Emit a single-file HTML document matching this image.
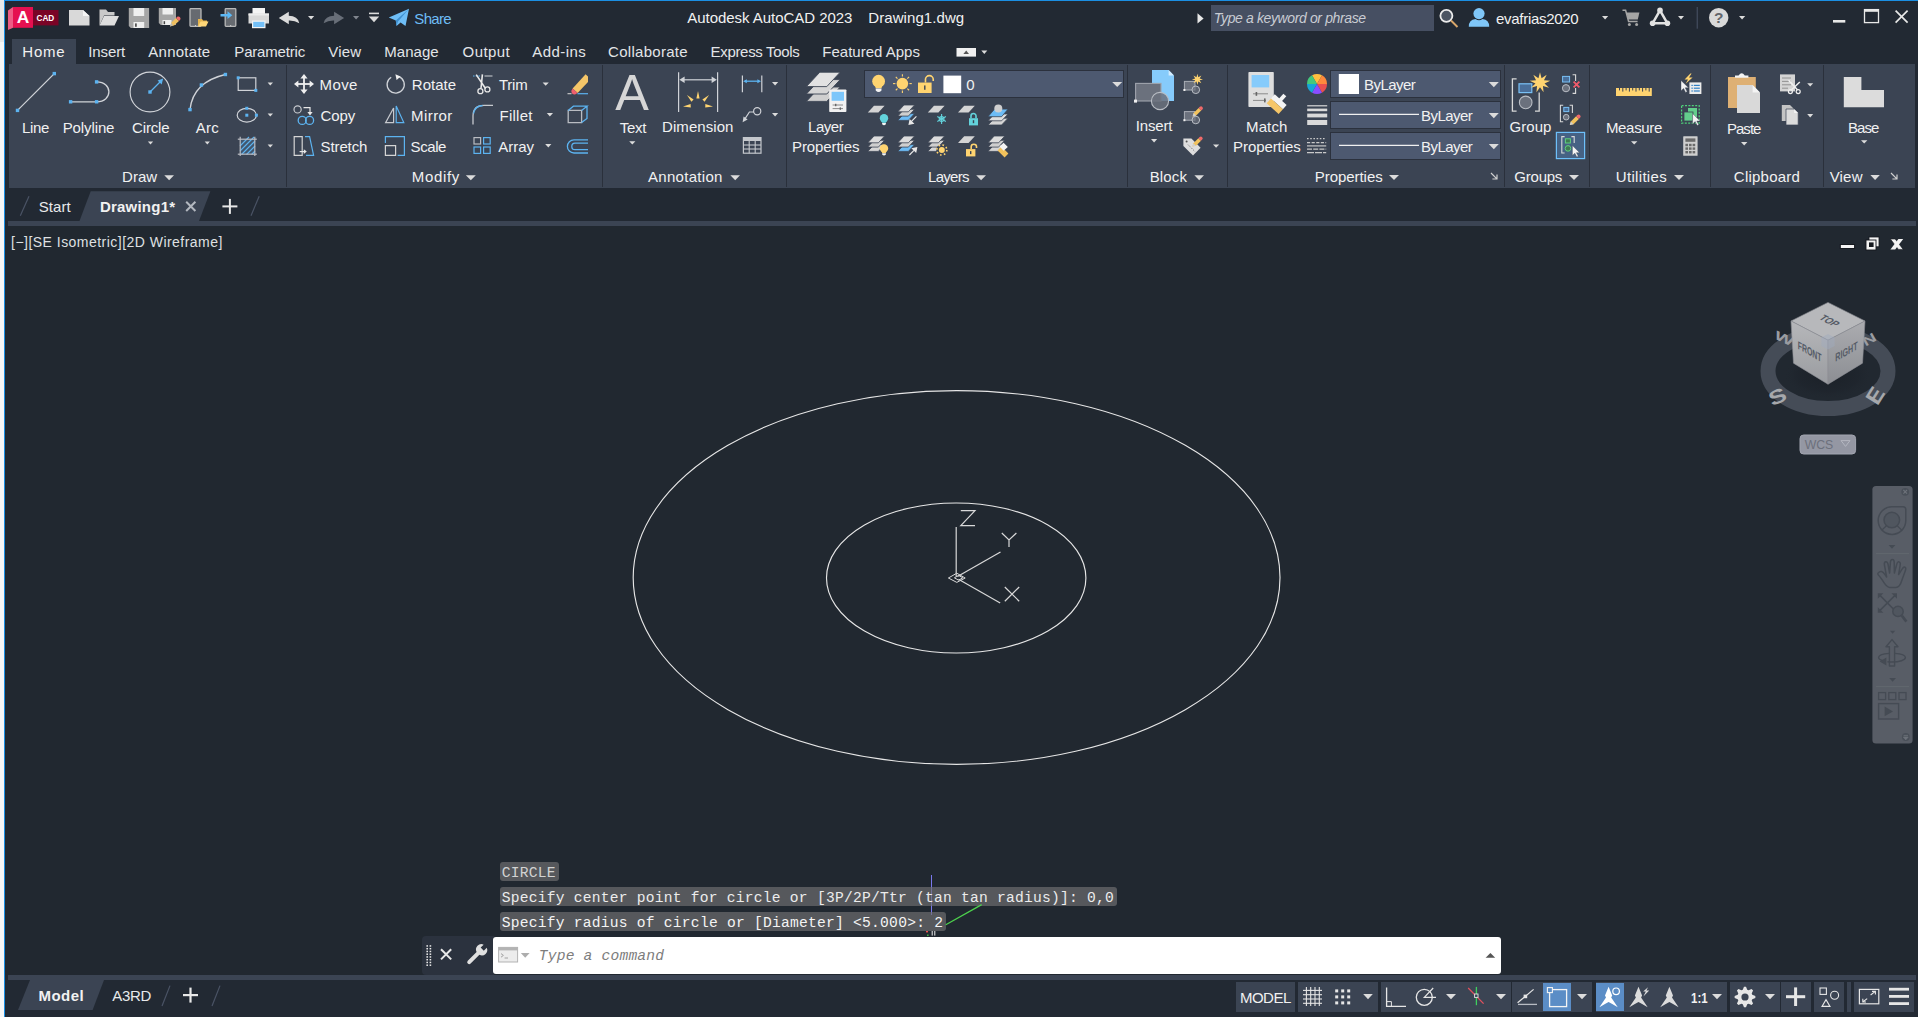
<!DOCTYPE html>
<html lang="en"><head><meta charset="utf-8"><title>Autodesk AutoCAD 2023 - Drawing1.dwg</title>
<style>
html,body{margin:0;padding:0;}
body{width:1918px;height:1017px;overflow:hidden;position:relative;background:#222933;font-family:"Liberation Sans",sans-serif;}
#bx div{position:absolute;}
.t{position:absolute;white-space:pre;}
.m{font-family:"Liberation Mono",monospace;}
#ic{position:absolute;left:0;top:0;}
</style></head><body>
<div id="bx">
<div style="left:0px;top:0px;width:4px;height:42px;background:#e9e9e9;"></div>
<div style="left:0px;top:42px;width:4px;height:975px;background:#f7f7f7;"></div>
<div style="left:4px;top:0px;width:1px;height:1017px;background:#1b8fe3;"></div>
<div style="left:4px;top:0px;width:1914px;height:1px;background:#1b8fe3;"></div>
<div style="left:12px;top:39px;width:64px;height:26px;background:#3b4453;"></div>
<div style="left:9px;top:64px;width:1906px;height:124px;background:#3b4453;"></div>
<div style="left:8px;top:221px;width:1908px;height:5px;background:#3b4453;"></div>
<div style="left:5px;top:226px;width:1913px;height:749px;background:#212830;"></div>
<div style="left:8px;top:975px;width:1908px;height:5px;background:#3b4453;"></div>
<div style="left:286px;top:65px;width:1px;height:122px;background:#2a303b;"></div>
<div style="left:602px;top:65px;width:1px;height:122px;background:#2a303b;"></div>
<div style="left:786px;top:65px;width:1px;height:122px;background:#2a303b;"></div>
<div style="left:1127px;top:65px;width:1px;height:122px;background:#2a303b;"></div>
<div style="left:1227px;top:65px;width:1px;height:122px;background:#2a303b;"></div>
<div style="left:1504px;top:65px;width:1px;height:122px;background:#2a303b;"></div>
<div style="left:1589px;top:65px;width:1px;height:122px;background:#2a303b;"></div>
<div style="left:1710px;top:65px;width:1px;height:122px;background:#2a303b;"></div>
<div style="left:1823px;top:65px;width:1px;height:122px;background:#2a303b;"></div>
<div style="left:1211px;top:5px;width:223px;height:26px;background:#464f62;"></div>
<div style="left:864px;top:70px;width:260px;height:28px;background:#4d5970;box-sizing:border-box;border:1px solid #2b313d;"></div>
<div style="left:1330px;top:70px;width:171px;height:28px;background:#4d5970;box-sizing:border-box;border:1px solid #2b313d;"></div>
<div style="left:1330px;top:101px;width:171px;height:28px;background:#4d5970;box-sizing:border-box;border:1px solid #2b313d;"></div>
<div style="left:1330px;top:132px;width:171px;height:28px;background:#4d5970;box-sizing:border-box;border:1px solid #2b313d;"></div>
<div style="left:1236px;top:982px;width:59px;height:29.5px;background:#3b4453;"></div>
<div style="left:1298px;top:982px;width:80px;height:29.5px;background:#3b4453;"></div>
<div style="left:1381px;top:982px;width:130px;height:29.5px;background:#3b4453;"></div>
<div style="left:1512px;top:982px;width:80px;height:29.5px;background:#3b4453;"></div>
<div style="left:1595.5px;top:982px;width:131.5px;height:29.5px;background:#3b4453;"></div>
<div style="left:1730px;top:982px;width:50px;height:29.5px;background:#3b4453;"></div>
<div style="left:1781px;top:982px;width:30px;height:29.5px;background:#3b4453;"></div>
<div style="left:1814px;top:982px;width:30px;height:29.5px;background:#3b4453;"></div>
<div style="left:1847px;top:982px;width:4px;height:29.5px;background:#3b4453;"></div>
<div style="left:1854px;top:982px;width:60px;height:29.5px;background:#3b4453;"></div>
<div style="left:1543px;top:982.5px;width:28px;height:28.5px;background:#5b8dc6;"></div>
<div style="left:1595.5px;top:982.5px;width:28.7px;height:28.5px;background:#5b8dc6;"></div>
<div style="left:931px;top:875px;width:1.2px;height:39.5px;background:#7a78ee;"></div>
<div style="left:500px;top:862px;width:59.3px;height:19px;background:rgba(112,112,114,0.68);border-radius:3px;"></div>
<div style="left:500px;top:887.3px;width:616.6px;height:18.8px;background:rgba(112,112,114,0.68);border-radius:3px;"></div>
<div style="left:500px;top:912.2px;width:445.8px;height:18.8px;background:rgba(112,112,114,0.68);border-radius:3px;"></div>
<div style="left:421.5px;top:936px;width:72px;height:38.5px;background:#2b323e;border-radius:4px 0 0 4px;"></div>
<div style="left:493px;top:937px;width:1008px;height:37px;background:#ffffff;border-radius:3px;"></div>
</div>
<svg id="ic" width="1918" height="1017" viewBox="0 0 1918 1017">
<path d="M8 10.5 L13 7 V27.8 L8 30 Z" fill="#ee5c86" />
<rect x="13" y="7" width="20" height="20.8" fill="#e51050" rx="0" />
<rect x="33" y="10" width="25.5" height="15.4" fill="#7a0426" rx="0" />
<text x="23" y="23.4" font-family="Liberation Sans, sans-serif" font-weight="700" font-size="17.4" fill="#fff" text-anchor="middle">A</text>
<text x="45.4" y="21" font-family="Liberation Sans, sans-serif" font-weight="700" font-size="9.4" fill="#fff" text-anchor="middle" textLength="17.8" lengthAdjust="spacingAndGlyphs">CAD</text>
<path d="M69 10 H83 L89.5 16 V25.5 H69 Z" fill="#d9d9d9" />
<path d="M83 10 L89.5 16 H83 Z" fill="#f4f4f4" />
<path d="M99.5 25.5 V9.5 H106 L108 12 H114.5 V15.5 H104 Z" fill="#c9c9c9" />
<path d="M99.5 25.5 L104 16 H119 L114.5 25.5 Z" fill="#dedede" />
<path d="M128.8 8 H149.1 V28 H130.8 L128.8 26 Z" fill="#a6a6a6" />
<rect x="133.5" y="8" width="10.7" height="8" fill="#efefef" rx="0" />
<rect x="133.5" y="22" width="10.7" height="6" fill="#efefef" rx="0" />
<rect x="135.1" y="23.4" width="1.6" height="3.4" fill="#444" rx="0" />
<path d="M158.8 8 H176 V25 H160.8 L158.8 23 Z" fill="#a6a6a6" />
<rect x="162.5" y="8" width="10.5" height="6.5" fill="#efefef" rx="0" />
<rect x="162.5" y="20" width="9" height="5" fill="#efefef" rx="0" />
<rect x="163.6" y="21.2" width="1.5" height="3" fill="#444" rx="0" />
<path d="M170 26.5 L171.2 22.8 L176 18 L179 21 L174 25.6 Z" fill="#f0c060" />
<path d="M176 18 L177.6 16.6 Q179 16 180 17.3 Q181 18.6 180.2 19.7 L179 21 Z" fill="#f06a6a" />
<path d="M170 26.5 L171.2 22.8 L173 25.2 Z" fill="#b9b9b9" />
<rect x="190" y="8.7" width="11" height="17.6" fill="#666a70" stroke="#b9b9b9" stroke-width="1.3" rx="0.8" />
<circle cx="195.5" cy="25.5" r="0.6" fill="#ddd" />
<path d="M198 26.5 V19 H202 L203.2 20.5 H207 V22 H201.5 Z" fill="#e6b54e" />
<path d="M198 26.5 L200.6 21.5 H208.5 L206 26.5 Z" fill="#ffd778" />
<rect x="225.2" y="8.7" width="10.6" height="17.6" fill="#666a70" stroke="#b9b9b9" stroke-width="1.3" rx="0.8" />
<circle cx="230.7" cy="25.5" r="0.6" fill="#ddd" />
<path d="M220.5 14 H227.5 V11.3 L232.3 15.2 L227.5 19 V16.4 H220.5 Z" fill="#5cb8f5" />
<rect x="252.5" y="8" width="12.5" height="6" fill="#f4f4f4" rx="0" />
<path d="M248.5 13.5 H269 V23.5 H248.5 Z" fill="#d9d9d9" />
<rect x="248.5" y="13.5" width="20.5" height="2" fill="#ececec" rx="0" />
<rect x="252" y="20.5" width="13.5" height="7.7" fill="#f4f4f4" rx="0" />
<rect x="253.2" y="21.8" width="11.2" height="5.2" fill="#74c0f7" rx="0" />
<path d="M0 6.2 L10 0 V4 Q19 4 20.5 11.5 Q16 8.5 10 8.7 V12.4 Z" fill="#dcdcdc" transform="translate(278.8 11.8)"/>
<path d="M308 16 H314.2 L311.1 19.6 Z" fill="#dcdcdc"/>
<path d="M0 6.2 L10 0 V4 Q19 4 20.5 11.5 Q16 8.5 10 8.7 V12.4 Z" fill="#686e78" transform="translate(344.1 11.8) scale(-1 1)"/>
<path d="M353 16 H359.2 L356.1 19.6 Z" fill="#80858e"/>
<rect x="369" y="12.6" width="10" height="1.6" fill="#dcdcdc" rx="0" />
<path d="M368.8 16.6 H379.2 L374 22.2 Z" fill="#dcdcdc"/>
<path d="M388.8 17.6 L409 8.8 L405.5 26 L400.6 22.6 L396.5 26 L395.8 20.6 Z" fill="#6ebdf6" />
<path d="M395.8 20.6 L409 8.8 L398 21.6 L396.5 26 Z" fill="#3f8fcf" />
<path d="M1197.5 13.3 L1203.6 18.4 L1197.5 23.5 Z" fill="#e8e8e8" />
<circle cx="1446.4" cy="15.8" r="6" fill="#4c5563" stroke="#ececec" stroke-width="1.8" />
<line x1="1451" y1="20.5" x2="1457.5" y2="27" stroke="#d8a66a" stroke-width="2" />
<circle cx="1479" cy="13.6" r="5.6" fill="#7fc6f8" />
<path d="M1468.8 26.7 Q1468.8 19.6 1475.5 19 Q1479 21.6 1482.5 19 Q1489.2 19.6 1489.2 26.7 Z" fill="#7fc6f8" />
<path d="M1602 16 H1608.2 L1605.1 19.6 Z" fill="#dcdcdc"/>
<path d="M1622.5 10.3 H1625.6 L1628.6 21.4 H1637.6" fill="none" stroke="#a5a5a5" stroke-width="1.5" />
<path d="M1626.4 12.6 H1639.4 L1637.8 19.6 H1628.2 Z" fill="#a5a5a5" />
<circle cx="1629.4" cy="24.6" r="1.5" fill="#a5a5a5" />
<circle cx="1636.6" cy="24.6" r="1.5" fill="#a5a5a5" />
<path d="M1660 10.4 L1652.6 23.3 H1667.4 Z" fill="none" stroke="#e2e2e2" stroke-width="2.5" stroke-linejoin="round"/>
<circle cx="1660" cy="10.4" r="2.8" fill="#e2e2e2" />
<circle cx="1652.6" cy="23.3" r="2.8" fill="#e2e2e2" />
<circle cx="1667.4" cy="23.3" r="2.8" fill="#e2e2e2" />
<path d="M1678 16 H1684 L1681 19.6 Z" fill="#dcdcdc"/>
<rect x="1696.7" y="7" width="1" height="21.7" fill="#4a5468" rx="0" />
<circle cx="1718.7" cy="17.7" r="9.7" fill="#d9d9d9" />
<text x="1718.7" y="23.4" font-family="Liberation Sans, sans-serif" font-weight="700" font-size="15.5" fill="#62656b" text-anchor="middle">?</text>
<path d="M1739 16 H1745.2 L1742.1 19.6 Z" fill="#dcdcdc"/>
<rect x="1833" y="20" width="12.3" height="2.6" fill="#e8e8e8" rx="0" />
<rect x="1864.5" y="9.6" width="14" height="13" fill="none" stroke="#e8e8e8" stroke-width="1.3" rx="0" />
<rect x="1864" y="9" width="15" height="2.8" fill="#e8e8e8" rx="0" />
<line x1="1895.6" y1="10.6" x2="1907.6" y2="22.6" stroke="#e8e8e8" stroke-width="1.7" />
<line x1="1907.6" y1="10.6" x2="1895.6" y2="22.6" stroke="#e8e8e8" stroke-width="1.7" />
<rect x="956.5" y="48" width="19.5" height="8.6" fill="#f0f0f0" rx="0" />
<path d="M963.4 54 L966.2 50.4 L969 54 Z" fill="#555" />
<path d="M981.3 50.6 H987.3 L984.3 54 Z" fill="#dcdcdc"/>
<line x1="17.5" y1="110.4" x2="54.3" y2="73.6" stroke="#d0d3d8" stroke-width="1.3" />
<rect x="15.8" y="108.7" width="3.4" height="3.4" fill="#5cb3f0" rx="0" />
<rect x="52.6" y="71.9" width="3.4" height="3.4" fill="#5cb3f0" rx="0" />
<path d="M70.6 101.8 H96.6 C113 101.8 113 81.9 96.6 81.9" fill="none" stroke="#d0d3d8" stroke-width="1.3" />
<rect x="68.9" y="100.1" width="3.4" height="3.4" fill="#5cb3f0" rx="0" />
<rect x="94.9" y="100.1" width="3.4" height="3.4" fill="#5cb3f0" rx="0" />
<rect x="94.9" y="80.2" width="3.4" height="3.4" fill="#5cb3f0" rx="0" />
<circle cx="150" cy="92" r="19.9" fill="none" stroke="#d0d3d8" stroke-width="1.15" />
<line x1="150" y1="92" x2="161" y2="81" stroke="#5cb3f0" stroke-width="1.3" />
<rect x="148.3" y="90.3" width="3.4" height="3.4" fill="#5cb3f0" rx="0" />
<path d="M163.2 78.6 L161.6 84.4 L157.6 80.4 Z" fill="#5cb3f0" />
<path d="M190 109.6 Q193 82 225.4 74.5" fill="none" stroke="#d0d3d8" stroke-width="1.3" />
<rect x="188.3" y="107.9" width="3.4" height="3.4" fill="#5cb3f0" rx="0" />
<rect x="199.7" y="83.3" width="3.4" height="3.4" fill="#5cb3f0" rx="0" />
<rect x="223.7" y="72.8" width="3.4" height="3.4" fill="#5cb3f0" rx="0" />
<path d="M147.9 141.5 H153.1 L150.5 144.5 Z" fill="#dcdcdc"/>
<path d="M204.7 141.5 H209.9 L207.3 144.5 Z" fill="#dcdcdc"/>
<rect x="238.2" y="77.8" width="17.6" height="12.6" fill="none" stroke="#d0d3d8" stroke-width="1.2" rx="0" />
<rect x="236.7" y="76.3" width="3" height="3" fill="#5cb3f0" rx="0" />
<rect x="254.3" y="88.9" width="3" height="3" fill="#5cb3f0" rx="0" />
<path d="M267.6 82.5 H273 L270.3 85.6 Z" fill="#dcdcdc"/>
<ellipse cx="246.8" cy="115.2" rx="9.6" ry="6.9" fill="none" stroke="#d0d3d8" stroke-width="1.2"/>
<rect x="245.3" y="113.7" width="3" height="3" fill="#5cb3f0" rx="0" />
<rect x="245.3" y="106.8" width="3" height="3" fill="#5cb3f0" rx="0" />
<rect x="254.9" y="113.7" width="3" height="3" fill="#5cb3f0" rx="0" />
<path d="M267.6 113.5 H273 L270.3 116.6 Z" fill="#dcdcdc"/>
<g stroke="#5cb3f0" stroke-width="1.1"><path d="M240 146 L249 137 M240 151 L254 137 M241.5 154.5 L255 141 M246.5 154.5 L255 146 M251.5 154.5 L255 151"/></g>
<rect x="240" y="139" width="15" height="15" fill="rgba(92,179,240,0.18)" rx="0" />
<line x1="240.2" y1="136.7" x2="240.2" y2="156" stroke="#b9bcc2" stroke-width="1.2" />
<line x1="254.8" y1="136.7" x2="254.8" y2="156" stroke="#b9bcc2" stroke-width="1.2" />
<line x1="237.8" y1="139.2" x2="256.8" y2="139.2" stroke="#b9bcc2" stroke-width="1.2" />
<line x1="237.8" y1="154.2" x2="256.8" y2="154.2" stroke="#b9bcc2" stroke-width="1.2" />
<path d="M267.6 144.4 H273 L270.3 147.5 Z" fill="#dcdcdc"/>
<path d="M164.3 175.2 H174 L169.15 180.2 Z" fill="#dcdcdc"/>
<g fill="#f0f0f0"><rect x="296.5" y="83.1" width="15" height="1.8"/><rect x="303.1" y="76.5" width="1.8" height="15"/><path d="M304 74 L307.6 78.4 H300.4 Z"/><path d="M304 94 L307.6 89.6 H300.4 Z"/><path d="M294 84 L298.4 80.4 V87.6 Z"/><path d="M314 84 L309.6 80.4 V87.6 Z"/></g>
<path d="M399 76.6 A8.6 8.6 0 1 1 391.2 77.2" fill="none" stroke="#d0d3d8" stroke-width="1.3" />
<path d="M395.4 74.2 L400.6 76.4 L396.6 80 Z" fill="#f0f0f0" />
<line x1="473" y1="76" x2="480.5" y2="76" stroke="#5cb3f0" stroke-width="1.2" stroke-dasharray="1.6 1.1"/>
<line x1="484.5" y1="76" x2="492.5" y2="76" stroke="#b9bcc2" stroke-width="1.2" />
<path d="M476.2 74.6 L485.5 88.5 M482.4 74.4 L481 88.5" fill="none" stroke="#e8e8e8" stroke-width="1.6" />
<circle cx="480.4" cy="91.2" r="2.5" fill="none" stroke="#e8e8e8" stroke-width="1.3" />
<circle cx="487.4" cy="89.4" r="2.5" fill="none" stroke="#e8e8e8" stroke-width="1.3" />
<path d="M542.6 82.4 H548.8 L545.7 85.8 Z" fill="#dcdcdc"/>
<path d="M572.6 88.6 L585.6 74.2 L588 76.4 L588 82 L577.6 93 Z" fill="#f5c668" />
<path d="M572.6 88.6 L577.6 93 L575 94.4 Q572.4 94.8 571.6 92.6 Q571 90.6 572.6 88.6 Z" fill="#f0606e" />
<line x1="567.5" y1="93.7" x2="571.5" y2="93.7" stroke="#cfcfcf" stroke-width="1.1" />
<line x1="577.5" y1="93.7" x2="588" y2="93.7" stroke="#5cb3f0" stroke-width="1.2" />
<circle cx="297.6" cy="109.4" r="3.6" fill="none" stroke="#c6c9ce" stroke-width="1.2" />
<path d="M303.5 107.6 H310 V112.5" fill="none" stroke="#e8e8e8" stroke-width="1.2" />
<path d="M310 115.6 L307.4 112 H312.6 Z" fill="#e8e8e8" />
<circle cx="302.2" cy="120.4" r="4" fill="none" stroke="#5cb3f0" stroke-width="1.3" />
<circle cx="309.6" cy="120.4" r="4" fill="none" stroke="#5cb3f0" stroke-width="1.3" />
<path d="M393.6 108 V122.6 H385.6 Z" fill="none" stroke="#c6c9ce" stroke-width="1.2" />
<path d="M396.2 106 V122.6 H403.8 Z" fill="none" stroke="#5cb3f0" stroke-width="1.2" />
<path d="M473 124.6 V116 Q473 105.4 484 105.4 H493" fill="none" stroke="#c6c9ce" stroke-width="1.3" />
<path d="M473.6 113.5 Q474.6 106.2 482.6 105.5" fill="none" stroke="#5cb3f0" stroke-width="1.4" />
<path d="M546.8 113 H553 L549.9 116.4 Z" fill="#dcdcdc"/>
<path d="M568.2 110.4 H581.6 V122.6 H568.2 Z" fill="none" stroke="#b9bcc2" stroke-width="1.3" />
<path d="M568.2 110.4 L573.4 106.2 H587 L581.6 110.4 M587 106.2 V118.4 L581.6 122.6" fill="none" stroke="#5cb3f0" stroke-width="1.3" />
<path d="M294.2 136.6 H302.2 V155.4 H294.2 Z" fill="none" stroke="#d4d4d4" stroke-width="1.2" />
<path d="M305 136.6 H309.6 L313.6 155.4 H306" fill="none" stroke="#5cb3f0" stroke-width="1.2" />
<path d="M299.6 151.6 H304.5" fill="none" stroke="#e8e8e8" stroke-width="1.2" />
<path d="M306.8 151.6 L303.8 149.2 V154 Z" fill="#e8e8e8" />
<path d="M385.4 145.6 H395.6 V155.4 H385.4 Z" fill="none" stroke="#d4d4d4" stroke-width="1.2" />
<path d="M385.4 143 V136.6 H404.4 V155.4 H397.6" fill="none" stroke="#5cb3f0" stroke-width="1.2" />
<rect x="474" y="137.6" width="6.6" height="6.4" fill="none" stroke="#b9bcc2" stroke-width="1.2" rx="0" />
<rect x="474" y="147" width="6.6" height="6.4" fill="none" stroke="#5cb3f0" stroke-width="1.2" rx="0" />
<rect x="483.6" y="137.6" width="6.6" height="6.4" fill="none" stroke="#5cb3f0" stroke-width="1.2" rx="0" />
<rect x="483.6" y="147" width="6.6" height="6.4" fill="none" stroke="#5cb3f0" stroke-width="1.2" rx="0" />
<path d="M545.2 144 H551.4 L548.3 147.4 Z" fill="#dcdcdc"/>
<path d="M588 139.8 H574 A6.6 6.6 0 0 0 574 153 H588" fill="none" stroke="#5cb3f0" stroke-width="1.3" />
<path d="M588 143.2 H575 A3.2 3.2 0 0 0 575 149.6 H588" fill="none" stroke="#5cb3f0" stroke-width="1.3" />
<path d="M465.8 175.2 H475.8 L470.8 180.2 Z" fill="#dcdcdc"/>
<path d="M629.2 141.3 H635.4 L632.3 144.6 Z" fill="#dcdcdc"/>
<line x1="678.6" y1="72.2" x2="678.6" y2="112" stroke="#d0d3d8" stroke-width="1.2" />
<line x1="717.6" y1="72.2" x2="717.6" y2="112" stroke="#d0d3d8" stroke-width="1.2" />
<line x1="682" y1="79.8" x2="714" y2="79.8" stroke="#d0d3d8" stroke-width="1.2" />
<path d="M679.4 79.8 L684.6 76.6 V83 Z" fill="#d0d3d8" />
<path d="M716.8 79.8 L711.6 76.6 V83 Z" fill="#d0d3d8" />
<g fill="#ffd470"><path d="M698 91 L699.6 98.4 H696.4 Z"/><path d="M687 95 L693.6 99.4 L691.4 101.8 Z"/><path d="M709 95 L702.4 99.4 L704.6 101.8 Z"/><path d="M683 106.4 L690.6 104 L690.8 107.4 Z"/><path d="M713 106.4 L705.4 104 L705.2 107.4 Z"/></g>
<line x1="742.4" y1="75.4" x2="742.4" y2="92.2" stroke="#d0d3d8" stroke-width="1.2" />
<line x1="761.8" y1="75.4" x2="761.8" y2="92.2" stroke="#d0d3d8" stroke-width="1.2" />
<line x1="745" y1="81.2" x2="759.2" y2="81.2" stroke="#5cb3f0" stroke-width="1.3" />
<path d="M743.2 81.2 L746.8 79.2 V83.2 Z" fill="#5cb3f0" />
<path d="M761 81.2 L757.4 79.2 V83.2 Z" fill="#5cb3f0" />
<path d="M772 82 H778.2 L775.1 85.4 Z" fill="#dcdcdc"/>
<circle cx="757.2" cy="111.2" r="3.6" fill="none" stroke="#d0d3d8" stroke-width="1.2" />
<path d="M753.8 112 H749.4 L744.6 119.4" fill="none" stroke="#d0d3d8" stroke-width="1.2" />
<path d="M742.6 122.2 L743.6 116.6 L747.6 119.4 Z" fill="#d0d3d8" />
<path d="M772 113 H778.2 L775.1 116.4 Z" fill="#dcdcdc"/>
<rect x="743.4" y="137.6" width="17.6" height="15.6" fill="none" stroke="#c4c7cc" stroke-width="1.2" rx="0" />
<rect x="743.4" y="137.6" width="17.6" height="3.4" fill="#c4c7cc" rx="0" />
<line x1="743.4" y1="145" x2="761" y2="145" stroke="#c4c7cc" stroke-width="1.1" />
<line x1="743.4" y1="149" x2="761" y2="149" stroke="#c4c7cc" stroke-width="1.1" />
<line x1="749.2" y1="141" x2="749.2" y2="153.2" stroke="#c4c7cc" stroke-width="1.1" />
<line x1="755.2" y1="141" x2="755.2" y2="153.2" stroke="#c4c7cc" stroke-width="1.1" />
<path d="M730.4 175.2 H740 L735.2 180.2 Z" fill="#dcdcdc"/>
<path d="M819.8 87 H840.2 L826.8 101.4 H806.4 Z" fill="#cfcfcf" stroke="#3b4453" stroke-width="0.9" />
<path d="M819.8 79.6 H840.2 L826.8 94 H806.4 Z" fill="#d6d6d6" stroke="#3b4453" stroke-width="0.9" />
<path d="M819.8 72.2 H840.2 L826.8 86.6 H806.4 Z" fill="#e2e2e2" stroke="#3b4453" stroke-width="0.9" />
<rect x="829.2" y="89.4" width="17.2" height="22.6" fill="#f1f1f1" rx="0.8" />
<rect x="831.6" y="91.8" width="12.4" height="9" fill="#7cc6fa" rx="0" />
<line x1="832.6" y1="105" x2="843" y2="105" stroke="#8a8a8a" stroke-width="1" />
<line x1="832.6" y1="108.6" x2="843" y2="108.6" stroke="#8a8a8a" stroke-width="1" />
<rect x="835" y="103.8" width="1.4" height="2.4" fill="#666" rx="0" />
<rect x="839.6" y="107.4" width="1.4" height="2.4" fill="#666" rx="0" />
<circle cx="878.6" cy="81.2" r="6.4" fill="#ffd470" />
<path d="M875.08 86 H882.12 L881.48 88.24 H875.72 Z" fill="#ffd470" />
<path d="M875.72 88.56 H881.48 V90.48 Q878.6 93.68 875.72 90.48 Z" fill="#f4f4f4" />
<circle cx="902.4" cy="83.6" r="5.8" fill="#ffd470" />
<line x1="909.4" y1="83.6" x2="911.8" y2="83.6" stroke="#ffd470" stroke-width="1.1" />
<line x1="907.35" y1="88.5497" x2="909.047" y2="90.2468" stroke="#ffd470" stroke-width="1.1" />
<line x1="902.4" y1="90.6" x2="902.4" y2="93" stroke="#ffd470" stroke-width="1.1" />
<line x1="897.45" y1="88.5497" x2="895.753" y2="90.2468" stroke="#ffd470" stroke-width="1.1" />
<line x1="895.4" y1="83.6" x2="893" y2="83.6" stroke="#ffd470" stroke-width="1.1" />
<line x1="897.45" y1="78.6503" x2="895.753" y2="76.9532" stroke="#ffd470" stroke-width="1.1" />
<line x1="902.4" y1="76.6" x2="902.4" y2="74.2" stroke="#ffd470" stroke-width="1.1" />
<line x1="907.35" y1="78.6503" x2="909.047" y2="76.9532" stroke="#ffd470" stroke-width="1.1" />
<rect x="918" y="82.56" width="13.6" height="10.44" fill="#ffd470" rx="0" />
<path d="M925.48 82.56 V79.32 A3.808 3.6 0 0 1 933.232 79.32 V81.12" fill="none" stroke="#ffd470" stroke-width="1.6" />
<rect x="924.1" y="85.44" width="1.4" height="4.32" fill="#3b4453" rx="0" />
<rect x="943.4" y="75.6" width="17.8" height="17.6" fill="#ffffff" rx="0" />
<path d="M1112.2 82 H1122.2 L1117.2 87 Z" fill="#dcdcdc"/>
<path d="M874 105.8 H884.6 L878.4 112.6 H867.8 Z" fill="#d4d4d4" />
<circle cx="884" cy="118.2" r="4.2" fill="#63d3dc" />
<path d="M881.69 121.35 H886.31 L885.89 122.82 H882.11 Z" fill="#63d3dc" />
<path d="M882.11 123.03 H885.89 V124.29 Q884 126.39 882.11 124.29 Z" fill="#f4f4f4" />
<path d="M904 113.6 H914.6 L908.4 120.4 H897.8 Z" fill="#6dbcf5" stroke="#3b4453" stroke-width="0.8" />
<path d="M904 109.3 H914.6 L908.4 116.1 H897.8 Z" fill="#cfcfcf" stroke="#3b4453" stroke-width="0.8" />
<path d="M904 105 H914.6 L908.4 111.8 H897.8 Z" fill="#dcdcdc" stroke="#3b4453" stroke-width="0.8" />
<path d="M916.4 116.4 L911 121.8" fill="none" stroke="#e8e8e8" stroke-width="1.2" />
<path d="M908.4 125 L909.6 119 L914.4 123.8 Z" fill="#e8e8e8" />
<path d="M934 105.8 H944.6 L938.4 112.6 H927.8 Z" fill="#d4d4d4" />
<g stroke="#63d3dc" stroke-width="1.1"><path d="M941.6 114 V124 M937.3 116.5 L945.9 121.5 M937.3 121.5 L945.9 116.5"/><circle cx="941.6" cy="119" r="2.4" fill="none"/></g>
<path d="M964.2 105.8 H974.8 L968.6 112.6 H958 Z" fill="#d4d4d4" />
<rect x="969" y="118.208" width="9" height="7.192" fill="#63d3dc" rx="0" />
<path d="M970.98 118.208 V115.976 A2.52 2.48 0 0 1 976.02 115.976 V118.208" fill="none" stroke="#63d3dc" stroke-width="1.6" />
<rect x="972.8" y="120.192" width="1.4" height="2.976" fill="#3b4453" rx="0" />
<path d="M994.5 118.2 H1008.1 L1001.6 125 H988 Z" fill="#d4d4d4" stroke="#3b4453" stroke-width="0.8" />
<path d="M994.5 114 H1008.1 L1001.6 120.8 H988 Z" fill="#dedede" stroke="#3b4453" stroke-width="0.8" />
<path d="M994.5 109.1 H1008.1 L1001.6 116.7 H988 Z" fill="#6dbcf5" stroke="#3b4453" stroke-width="0.8" />
<circle cx="998.3" cy="108.6" r="4" fill="#cfcfcf" />
<path d="M874 144.6 H884.6 L878.4 151.4 H867.8 Z" fill="#d6d6d6" stroke="#3b4453" stroke-width="0.8" />
<path d="M874 140.3 H884.6 L878.4 147.1 H867.8 Z" fill="#cfcfcf" stroke="#3b4453" stroke-width="0.8" />
<path d="M874 136 H884.6 L878.4 142.8 H867.8 Z" fill="#dcdcdc" stroke="#3b4453" stroke-width="0.8" />
<circle cx="884" cy="148.4" r="4.2" fill="#ffd470" />
<path d="M881.69 151.55 H886.31 L885.89 153.02 H882.11 Z" fill="#ffd470" />
<path d="M882.11 153.23 H885.89 V154.49 Q884 156.59 882.11 154.49 Z" fill="#f4f4f4" />
<path d="M904 144.6 H914.6 L908.4 151.4 H897.8 Z" fill="#6dbcf5" stroke="#3b4453" stroke-width="0.8" />
<path d="M904 140.3 H914.6 L908.4 147.1 H897.8 Z" fill="#cfcfcf" stroke="#3b4453" stroke-width="0.8" />
<path d="M904 136 H914.6 L908.4 142.8 H897.8 Z" fill="#dcdcdc" stroke="#3b4453" stroke-width="0.8" />
<path d="M909.4 155 L914 150.4" fill="none" stroke="#e8e8e8" stroke-width="1.2" />
<path d="M917.4 147 L916.2 153 L911.4 148.2 Z" fill="#e8e8e8" />
<path d="M934 144.6 H944.6 L938.4 151.4 H927.8 Z" fill="#d6d6d6" stroke="#3b4453" stroke-width="0.8" />
<path d="M934 140.3 H944.6 L938.4 147.1 H927.8 Z" fill="#cfcfcf" stroke="#3b4453" stroke-width="0.8" />
<path d="M934 136 H944.6 L938.4 142.8 H927.8 Z" fill="#dcdcdc" stroke="#3b4453" stroke-width="0.8" />
<circle cx="941.8" cy="150" r="5.6" fill="#3b4453" />
<circle cx="941.8" cy="150" r="3" fill="#ffd470" />
<circle cx="941.8" cy="150" r="5" fill="none" stroke="#ffd470" stroke-width="1.6" stroke-dasharray="1.6 2.33"/>
<path d="M964.2 136.2 H974.8 L968.6 143 H958 Z" fill="#d4d4d4" />
<rect x="966" y="149.092" width="9.4" height="7.308" fill="#ffd470" rx="0" />
<path d="M971.17 149.092 V146.824 A2.632 2.52 0 0 1 976.528 146.824 V148.084" fill="none" stroke="#ffd470" stroke-width="1.6" />
<rect x="970" y="151.108" width="1.4" height="3.024" fill="#3b4453" rx="0" />
<path d="M994.2 144.6 H1004.8 L998.6 151.4 H988 Z" fill="#d6d6d6" stroke="#3b4453" stroke-width="0.8" />
<path d="M994.2 140.3 H1004.8 L998.6 147.1 H988 Z" fill="#cfcfcf" stroke="#3b4453" stroke-width="0.8" />
<path d="M994.2 136 H1004.8 L998.6 142.8 H988 Z" fill="#dcdcdc" stroke="#3b4453" stroke-width="0.8" />
<path d="M997.6 150.4 L1001.4 146.6 L1008.4 153.6 L1004.6 157.4 Z" fill="#f2c25c" />
<path d="M999.6 146.6 L1003.6 142.8 L1007.8 147 L1003.6 150.8 Z" fill="#f4f4f4" />
<path d="M976.2 175.2 H986 L981.1 180.2 Z" fill="#dcdcdc"/>
<path d="M1152 70 H1168.6 L1174 75.4 V101 H1152 Z" fill="#86cbfb" />
<path d="M1168.6 70 L1174 75.4 H1168.6 Z" fill="#d4ecfd" />
<rect x="1135.6" y="83.4" width="25.4" height="17.6" fill="#6b717d" stroke="#9fa4ad" stroke-width="1.1" rx="0" />
<circle cx="1160" cy="101" r="8.6" fill="rgba(107,113,125,0.85)" stroke="#b9bdc4" stroke-width="1.1" />
<rect x="1134" y="99.6" width="3" height="3" fill="#f0f0f0" rx="0" />
<path d="M1151 139 H1157.2 L1154.1 142.4 Z" fill="#dcdcdc"/>
<rect x="1184.4" y="81.4" width="10.6" height="8.6" fill="#6b717d" stroke="#a9adb5" stroke-width="1" rx="0" />
<circle cx="1195.8" cy="89.8" r="3.8" fill="rgba(107,113,125,0.7)" stroke="#b9bdc4" stroke-width="1" />
<rect x="1183.4" y="89" width="2" height="2" fill="#f0f0f0" rx="0" />
<path d="M1197.40 73.80 L1198.32 77.18 L1201.36 75.44 L1199.62 78.48 L1203.00 79.40 L1199.62 80.32 L1201.36 83.36 L1198.32 81.62 L1197.40 85.00 L1196.48 81.62 L1193.44 83.36 L1195.18 80.32 L1191.80 79.40 L1195.18 78.48 L1193.44 75.44 L1196.48 77.18 Z" fill="#ffd470" />
<rect x="1184.4" y="111.6" width="10.6" height="8.6" fill="#6b717d" stroke="#a9adb5" stroke-width="1" rx="0" />
<circle cx="1195.8" cy="120" r="3.8" fill="rgba(107,113,125,0.7)" stroke="#b9bdc4" stroke-width="1" />
<rect x="1183.4" y="119.2" width="2" height="2" fill="#f0f0f0" rx="0" />
<g transform="translate(1192.6 116.4) scale(1)"><path d="M0 0 L1 -3.4 L6 -8.4 L8.6 -5.8 L3.6 -0.8 Z" fill="#f2c25c"/><path d="M6 -8.4 L7.2 -9.6 Q8.6 -10.6 9.8 -9.4 Q11 -8 9.8 -7 L8.6 -5.8 Z" fill="#f06a6a"/><path d="M0 0 L1 -3.4 L3.6 -0.8 Z" fill="#cfcfcf"/></g>
<path d="M1183.4 138.6 H1191.4 L1200.6 147.8 L1193 155.6 L1183.4 146 Z" fill="#dedede" />
<circle cx="1186.6" cy="141.6" r="1" fill="#555" />
<path d="M1188 144.6 L1195 151.6" fill="none" stroke="#777" stroke-width="0.9" stroke-dasharray="1.4 1"/>
<g transform="translate(1192.4 146.6) scale(1)"><path d="M0 0 L1 -3.4 L6 -8.4 L8.6 -5.8 L3.6 -0.8 Z" fill="#f2c25c"/><path d="M6 -8.4 L7.2 -9.6 Q8.6 -10.6 9.8 -9.4 Q11 -8 9.8 -7 L8.6 -5.8 Z" fill="#f06a6a"/><path d="M0 0 L1 -3.4 L3.6 -0.8 Z" fill="#cfcfcf"/></g>
<path d="M1213 144.4 H1219.2 L1216.1 147.8 Z" fill="#dcdcdc"/>
<path d="M1194.4 175.2 H1204 L1199.2 180.2 Z" fill="#dcdcdc"/>
<rect x="1248.4" y="72" width="25.4" height="35" fill="#dedede" rx="0.8" />
<rect x="1251.6" y="75" width="17.6" height="12.4" fill="#86cbfb" rx="0" />
<line x1="1253" y1="93.8" x2="1268" y2="93.8" stroke="#8a8a8a" stroke-width="1" />
<line x1="1253" y1="100.4" x2="1266" y2="100.4" stroke="#8a8a8a" stroke-width="1" />
<rect x="1255.6" y="92" width="1.6" height="3.8" fill="#666" rx="0" />
<rect x="1264" y="98.4" width="1.6" height="4" fill="#666" rx="0" />
<g transform="translate(1276.4 104.4) rotate(42)"><rect x="-8" y="-6.4" width="16" height="5.6" fill="#f4f4f4"/><rect x="-2" y="-12.6" width="4" height="7" fill="#f4f4f4"/><rect x="-8" y="-0.8" width="16" height="6.4" fill="#f5c668"/></g>
<path d="M1317 84 L1312.00 75.34 A10 10 0 0 1 1322.00 75.34 Z" fill="#ffbf3f" />
<path d="M1317 84 L1322.00 75.34 A10 10 0 0 1 1327.00 84.00 Z" fill="#ff8a3c" />
<path d="M1317 84 L1327.00 84.00 A10 10 0 0 1 1322.00 92.66 Z" fill="#e8504f" />
<path d="M1317 84 L1322.00 92.66 A10 10 0 0 1 1312.00 92.66 Z" fill="#8a4dff" />
<path d="M1317 84 L1312.00 92.66 A10 10 0 0 1 1307.00 84.00 Z" fill="#17a5d6" />
<path d="M1317 84 L1307.00 84.00 A10 10 0 0 1 1312.00 75.34 Z" fill="#44c97b" />
<rect x="1307.2" y="105.2" width="20" height="1.2" fill="#d9d9d9" rx="0" />
<rect x="1307.2" y="108.6" width="20" height="2.6" fill="#d9d9d9" rx="0" />
<rect x="1307.2" y="113.6" width="20" height="3.8" fill="#d9d9d9" rx="0" />
<rect x="1307.2" y="120" width="20" height="5" fill="#d9d9d9" rx="0" />
<line x1="1307" y1="138.6" x2="1326.2" y2="138.6" stroke="#c9c9c9" stroke-width="1.2" stroke-dasharray="1.6 1.6"/>
<line x1="1307" y1="142.6" x2="1326.2" y2="142.6" stroke="#c9c9c9" stroke-width="1.2" stroke-dasharray="3.2 1.4"/>
<line x1="1307" y1="145.9" x2="1326.2" y2="145.9" stroke="#c9c9c9" stroke-width="1.2" />
<line x1="1307" y1="149.2" x2="1326.2" y2="149.2" stroke="#c9c9c9" stroke-width="1.2" stroke-dasharray="5 1.2"/>
<line x1="1307" y1="152.6" x2="1326.2" y2="152.6" stroke="#c9c9c9" stroke-width="1.2" stroke-dasharray="7 1"/>
<rect x="1338.8" y="74" width="20.2" height="20" fill="#ffffff" rx="0" />
<line x1="1339" y1="114.4" x2="1419" y2="114.4" stroke="#f0f0f0" stroke-width="1.1" />
<line x1="1339" y1="145.4" x2="1419" y2="145.4" stroke="#f0f0f0" stroke-width="1.1" />
<path d="M1488.8 82 H1498.8 L1493.8 87.2 Z" fill="#dcdcdc"/>
<path d="M1488.8 113 H1498.8 L1493.8 118.2 Z" fill="#dcdcdc"/>
<path d="M1488.8 144 H1498.8 L1493.8 149.2 Z" fill="#dcdcdc"/>
<path d="M1389 175 H1399 L1394 180 Z" fill="#dcdcdc"/>
<path d="M1491 173 L1496.4 178.4 M1492.4 179 H1497 V174.4" fill="none" stroke="#d0d0d0" stroke-width="1.2" />
<path d="M1516.6 78.8 H1512.4 V111.2 H1516.6 M1539.2 92.4 V111.2 H1535" fill="none" stroke="#d9d9d9" stroke-width="1.3" />
<rect x="1519" y="83.8" width="12.8" height="8.8" fill="#4a6f9a" stroke="#79c0f5" stroke-width="1.2" rx="0" />
<circle cx="1525.7" cy="102.4" r="6.3" fill="#6b717d" stroke="#b9bdc4" stroke-width="1.1" />
<path d="M1540.00 72.20 L1541.57 78.28 L1546.68 74.63 L1543.98 80.30 L1550.24 80.79 L1544.53 83.40 L1549.01 87.80 L1542.96 86.12 L1543.56 92.37 L1540.00 87.20 L1536.44 92.37 L1537.04 86.12 L1530.99 87.80 L1535.47 83.40 L1529.76 80.79 L1536.02 80.30 L1533.32 74.63 L1538.43 78.28 Z" fill="#ffd470" />
<rect x="1562.6" y="76.4" width="7" height="5.6" fill="#4a6f9a" stroke="#79c0f5" stroke-width="1" rx="0" />
<circle cx="1566" cy="88.2" r="3.6" fill="#6b717d" stroke="#b9bdc4" stroke-width="1" />
<path d="M1572.6 74.8 H1575.6 V81 M1575.6 88 V93.4 H1572.6" fill="none" stroke="#d9d9d9" stroke-width="1.1" />
<path d="M1573.6 81.6 L1579.4 87.4 M1579.4 81.6 L1573.6 87.4" fill="none" stroke="#f05a6a" stroke-width="1.8" />
<path d="M1563.2 105.2 H1560.4 V121.8 H1563.2 M1569.6 105.2 H1572.4 V113" fill="none" stroke="#d9d9d9" stroke-width="1.1" />
<rect x="1563.8" y="107.4" width="5" height="4.2" fill="#4a6f9a" stroke="#79c0f5" stroke-width="1" rx="0" />
<circle cx="1566.2" cy="117.2" r="2.8" fill="#6b717d" stroke="#b9bdc4" stroke-width="1" />
<g transform="translate(1569.8 125) scale(1.05)"><path d="M0 0 L1 -3.4 L6 -8.4 L8.6 -5.8 L3.6 -0.8 Z" fill="#f2c25c"/><path d="M6 -8.4 L7.2 -9.6 Q8.6 -10.6 9.8 -9.4 Q11 -8 9.8 -7 L8.6 -5.8 Z" fill="#f06a6a"/><path d="M0 0 L1 -3.4 L3.6 -0.8 Z" fill="#cfcfcf"/></g>
<rect x="1556.4" y="132.4" width="28.2" height="26.2" fill="#466284" stroke="#6ec0fa" stroke-width="1.2" rx="0" />
<path d="M1564.6 136.6 H1561.8 V153 H1564.6 M1571.4 136.6 H1574.2 V143" fill="none" stroke="#d9d9d9" stroke-width="1.1" />
<rect x="1565.4" y="138.8" width="5" height="4.2" fill="#3f7a52" stroke="#5fd07f" stroke-width="1" rx="0" />
<circle cx="1568" cy="148.4" r="2.8" fill="#3f7a52" stroke="#5fd07f" stroke-width="1" />
<path d="M0 0 V10.4 L2.6 8 L4.6 12 L6.2 11.2 L4.2 7.4 H7.6 Z" fill="#f4f4f4" stroke="#3b4453" stroke-width="0.4" transform="translate(1572.4 145.6) scale(0.95)"/>
<path d="M1569 175 H1579 L1574 180 Z" fill="#dcdcdc"/>
<rect x="1616" y="88" width="35.8" height="8" fill="#ffd470" rx="0" />
<rect x="1619" y="88" width="1" height="2.4" fill="#3b4453" rx="0" />
<rect x="1622.3" y="88" width="1" height="3.6" fill="#3b4453" rx="0" />
<rect x="1625.6" y="88" width="1" height="2.4" fill="#3b4453" rx="0" />
<rect x="1628.9" y="88" width="1" height="3.6" fill="#3b4453" rx="0" />
<rect x="1632.2" y="88" width="1" height="2.4" fill="#3b4453" rx="0" />
<rect x="1635.5" y="88" width="1" height="3.6" fill="#3b4453" rx="0" />
<rect x="1638.8" y="88" width="1" height="2.4" fill="#3b4453" rx="0" />
<rect x="1642.1" y="88" width="1" height="3.6" fill="#3b4453" rx="0" />
<rect x="1645.4" y="88" width="1" height="2.4" fill="#3b4453" rx="0" />
<rect x="1648.7" y="88" width="1" height="3.6" fill="#3b4453" rx="0" />
<path d="M1631 141.2 H1637.4 L1634.2 144.6 Z" fill="#dcdcdc"/>
<path d="M1690.4 73.6 L1684.6 79.4 H1688 L1685.6 83.8 L1692.6 77.6 H1689 L1691.6 73.6 Z" fill="#ffd470" />
<rect x="1689.4" y="82.4" width="12" height="11.6" fill="#ececec" rx="0" />
<rect x="1691.4" y="84.8" width="1.4" height="1.2" fill="#2f7fc4" rx="0" />
<rect x="1693.8" y="84.8" width="6" height="1.2" fill="#2f7fc4" rx="0" />
<rect x="1691.4" y="87.6" width="1.4" height="1.2" fill="#2f7fc4" rx="0" />
<rect x="1693.8" y="87.6" width="6" height="1.2" fill="#2f7fc4" rx="0" />
<rect x="1691.4" y="90.4" width="1.4" height="1.2" fill="#2f7fc4" rx="0" />
<rect x="1693.8" y="90.4" width="6" height="1.2" fill="#2f7fc4" rx="0" />
<path d="M0 0 V10.4 L2.6 8 L4.6 12 L6.2 11.2 L4.2 7.4 H7.6 Z" fill="#f4f4f4" stroke="#3b4453" stroke-width="0.4" transform="translate(1681 80.4) scale(1)"/>
<rect x="1681.6" y="105.6" width="17.6" height="17.6" fill="none" stroke="#4fd27a" stroke-width="1.2" rx="0" stroke-dasharray="2 1.4"/>
<rect x="1688" y="108" width="9" height="9" fill="#63cf8c" rx="0" />
<rect x="1684" y="112" width="9" height="9" fill="#63cf8c" stroke="#3b4453" stroke-width="0.8" rx="0" />
<path d="M0 0 V10.4 L2.6 8 L4.6 12 L6.2 11.2 L4.2 7.4 H7.6 Z" fill="#f4f4f4" stroke="#3b4453" stroke-width="0.4" transform="translate(1692.6 113.6) scale(1)"/>
<rect x="1683.2" y="136.2" width="14.4" height="19.6" fill="#cfcfcf" rx="0.6" />
<rect x="1685.4" y="138.4" width="10" height="3.4" fill="#6a6a6a" rx="0" />
<rect x="1685.4" y="143.8" width="2.6" height="2.4" fill="#6a6a6a" rx="0" />
<rect x="1689" y="143.8" width="2.6" height="2.4" fill="#6a6a6a" rx="0" />
<rect x="1692.6" y="143.8" width="2.6" height="2.4" fill="#6a6a6a" rx="0" />
<rect x="1685.4" y="147.4" width="2.6" height="2.4" fill="#6a6a6a" rx="0" />
<rect x="1689" y="147.4" width="2.6" height="2.4" fill="#6a6a6a" rx="0" />
<rect x="1692.6" y="147.4" width="2.6" height="2.4" fill="#6a6a6a" rx="0" />
<rect x="1685.4" y="151" width="2.6" height="2.4" fill="#6a6a6a" rx="0" />
<rect x="1689" y="151" width="2.6" height="2.4" fill="#6a6a6a" rx="0" />
<rect x="1692.6" y="151" width="2.6" height="2.4" fill="#6a6a6a" rx="0" />
<path d="M1674 175 H1684 L1679 180 Z" fill="#dcdcdc"/>
<rect x="1728" y="77" width="27.8" height="31" fill="#deb074" rx="0" />
<path d="M1735 77.8 V75.6 H1738.6 Q1741.7 71 1744.8 75.6 H1748.4 V77.8 Z" fill="#f4f4f4" />
<path d="M1737 85 H1752.6 L1760 92.4 V113 H1737 Z" fill="#d9d9d9" />
<path d="M1752.6 85 L1760 92.4 H1752.6 Z" fill="#f4f4f4" />
<path d="M1741 142 H1747.4 L1744.2 145.5 Z" fill="#dcdcdc"/>
<rect x="1780" y="74.4" width="15" height="17" fill="#d4d4d4" rx="0" />
<line x1="1782" y1="78" x2="1791" y2="78" stroke="#8a8a8a" stroke-width="0.9" />
<line x1="1782" y1="81.4" x2="1791" y2="81.4" stroke="#8a8a8a" stroke-width="0.9" />
<line x1="1782" y1="84.8" x2="1791" y2="84.8" stroke="#8a8a8a" stroke-width="0.9" />
<line x1="1782" y1="88.2" x2="1788" y2="88.2" stroke="#8a8a8a" stroke-width="0.9" />
<path d="M1788.6 80.2 L1797.6 90 M1799.8 82 L1791.4 90" fill="none" stroke="#f0f0f0" stroke-width="1.5" />
<circle cx="1790.4" cy="91.6" r="2" fill="none" stroke="#f0f0f0" stroke-width="1.2" />
<circle cx="1798.2" cy="91.6" r="2" fill="none" stroke="#f0f0f0" stroke-width="1.2" />
<path d="M1807.2 83.2 H1813.2 L1810.2 86.6 Z" fill="#dcdcdc"/>
<path d="M1781.8 105 H1790 L1794 109 V121 H1781.8 Z" fill="#c4c4c4" />
<path d="M1786 109 H1794.2 L1798.2 113 V125 H1786 Z" fill="#dcdcdc" stroke="#3b4453" stroke-width="0.7" />
<path d="M1794.2 109 L1798.2 113 H1794.2 Z" fill="#f4f4f4" />
<path d="M1807.2 114 H1813.2 L1810.2 117.4 Z" fill="#dcdcdc"/>
<path d="M1843.8 77 H1861.4 V90 H1884 V107.2 H1843.8 Z" fill="#dcdcdc" />
<path d="M1861 140.2 H1867.4 L1864.2 143.6 Z" fill="#dcdcdc"/>
<path d="M1870.4 175 H1879.8 L1875.1 180 Z" fill="#dcdcdc"/>
<path d="M1891 173 L1896.4 178.4 M1892.4 179 H1897 V174.4" fill="none" stroke="#d0d0d0" stroke-width="1.2" />
<path d="M90.7 191.2 H210.4 L199 221 H79.5 Z" fill="#3b4453" />
<line x1="20.3" y1="215.7" x2="29" y2="196.2" stroke="#4a5365" stroke-width="1.2" />
<line x1="251" y1="215.7" x2="259.2" y2="196.2" stroke="#4a5365" stroke-width="1.2" />
<path d="M186.2 201.8 L195.4 211 M195.4 201.8 L186.2 211" fill="none" stroke="#b3b8c0" stroke-width="2" />
<rect x="222.4" y="205.4" width="15" height="2" fill="#e8e8e8" rx="0" />
<rect x="228.9" y="198.9" width="2" height="15" fill="#e8e8e8" rx="0" />
<rect x="1840.3" y="244.5" width="14.3" height="4" fill="#f4f4f4" stroke="#14181e" stroke-width="1" rx="0" />
<rect x="1869" y="237" width="10" height="9.8" fill="#f4f4f4" stroke="#14181e" stroke-width="0.8" rx="0" />
<rect x="1866" y="240" width="10" height="10" fill="#f4f4f4" stroke="#14181e" stroke-width="0.9" rx="0" />
<rect x="1869" y="242.4" width="4.6" height="4.6" fill="#14181e" rx="0" />
<path d="M1890.4 239 H1895.2 L1903.2 249.4 H1898.4 Z" fill="#f4f4f4" stroke="#14181e" stroke-width="0.6" />
<path d="M1903.2 239 H1898.4 L1890.4 249.4 H1895.2 Z" fill="#f4f4f4" />
<ellipse cx="956.6" cy="577.5" rx="323.4" ry="186.9" fill="none" stroke="#e6e6e6" stroke-width="1.15"/>
<ellipse cx="956.2" cy="578" rx="129.7" ry="75" fill="none" stroke="#e6e6e6" stroke-width="1.15"/>
<line x1="956.2" y1="526.9" x2="956.2" y2="576.6" stroke="#d9d9d9" stroke-width="1.2" />
<line x1="957.5" y1="576.6" x2="1000.5" y2="552" stroke="#d9d9d9" stroke-width="1.2" />
<line x1="958.5" y1="579.2" x2="1000.2" y2="603" stroke="#d9d9d9" stroke-width="1.2" />
<path d="M948.4 578 L956.8 573.2 L965.2 578 L956.8 582.4 Z" fill="none" stroke="#d9d9d9" stroke-width="1" />
<path d="M954.4 577.8 L958.6 575.4 L962.8 577.8 L958.6 580.2 Z" fill="none" stroke="#d9d9d9" stroke-width="1" />
<path d="M960.8 510.6 H975 L960.8 525.6 H975" fill="none" stroke="#d9d9d9" stroke-width="1.2" />
<path d="M1001.8 533 L1009 540 L1016.4 533 M1009 540 V547" fill="none" stroke="#d9d9d9" stroke-width="1.2" />
<path d="M1004.8 587 L1019.2 601.2 M1019.2 587 L1004.8 601.2" fill="none" stroke="#d9d9d9" stroke-width="1.2" />
<line x1="945.8" y1="924.8" x2="981.7" y2="904.6" stroke="#4dd14d" stroke-width="1.3" />
<line x1="932.2" y1="931" x2="932.2" y2="935.6" stroke="#f0f0f0" stroke-width="1" />
<line x1="934.8" y1="931" x2="934.8" y2="935.6" stroke="#f0f0f0" stroke-width="1" />
<rect x="926" y="931" width="2" height="1.4" fill="#f05050" rx="0" />
<rect x="927" y="934.6" width="1.6" height="1.2" fill="#4dd14d" rx="0" />
<defs><radialGradient id="vsh" cx="50%" cy="50%" r="50%"><stop offset="0" stop-color="#1a1f26" stop-opacity="0.9"/><stop offset="0.7" stop-color="#1d232b" stop-opacity="0.55"/><stop offset="1" stop-color="#212830" stop-opacity="0"/></radialGradient><linearGradient id="vfl" x1="0" y1="0" x2="0" y2="1"><stop offset="0" stop-color="#b6b7ba"/><stop offset="1" stop-color="#9a9ca0"/></linearGradient><linearGradient id="vfr" x1="0" y1="0" x2="0" y2="1"><stop offset="0" stop-color="#abacb0"/><stop offset="1" stop-color="#8c8e93"/></linearGradient></defs>
<ellipse cx="1828" cy="371" rx="60" ry="37.5" fill="none" stroke="#454c57" stroke-width="15"/>
<ellipse cx="1828" cy="375" rx="44" ry="24" fill="url(#vsh)"/>
<text transform="translate(1782.6 342.4) rotate(24) scale(1.34 0.78)" font-family="Liberation Sans, sans-serif" font-weight="700" font-size="16" fill="#9a9ca1" text-anchor="middle">W</text>
<text transform="translate(1871.4 343.4) rotate(-30) scale(1.2 0.8)" font-family="Liberation Sans, sans-serif" font-weight="700" font-size="16" fill="#9a9ca1" text-anchor="middle">N</text>
<path d="M1828 302.4 L1865 321 L1828 340.2 L1791 321 Z" fill="#b7b8bb" stroke="#85878d" stroke-width="0.6" />
<path d="M1791 321 L1828 340.2 V384.2 L1793.5 363.2 Z" fill="url(#vfl)" stroke="#8d8f95" stroke-width="0.6" />
<path d="M1865 321 L1828 340.2 V384.2 L1862.5 363.2 Z" fill="url(#vfr)" stroke="#8d8f95" stroke-width="0.6" />
<path d="M1828 334 L1834.6 337.6 V346 L1828 349.6 L1821.4 346 V337.6 Z" fill="rgba(160,170,190,0.45)" />
<text transform="translate(1826.4 323) rotate(27) skewX(-28)" font-family="Liberation Sans, sans-serif" font-weight="700" font-size="9.6" fill="#555b66" text-anchor="middle" textLength="18.5" lengthAdjust="spacingAndGlyphs">TOP</text>
<text transform="translate(1809.6 355.4) rotate(29.5) skewX(29.5) scale(1 0.9)" font-family="Liberation Sans, sans-serif" font-weight="700" font-size="11" fill="#555b66" text-anchor="middle" textLength="27.5" lengthAdjust="spacingAndGlyphs">FRONT</text>
<text transform="translate(1846.4 355.4) rotate(-29.5) skewX(-29.5) scale(1 0.9)" font-family="Liberation Sans, sans-serif" font-weight="700" font-size="11" fill="#555b66" text-anchor="middle" textLength="25.5" lengthAdjust="spacingAndGlyphs">RIGHT</text>
<text transform="translate(1780.2 403) rotate(-24) scale(1.32 1)" font-family="Liberation Sans, sans-serif" font-weight="700" font-size="20" fill="#a6a8ac" text-anchor="middle">S</text>
<text transform="translate(1881.6 399.6) rotate(-58) scale(1.12 1.05)" font-family="Liberation Sans, sans-serif" font-weight="700" font-size="21" fill="#a6a8ac" text-anchor="middle">E</text>
<rect x="1800" y="435" width="55.6" height="19" fill="#9497a3" stroke="#a2a5b0" stroke-width="1" rx="3.6" />
<text x="1819" y="448.8" font-family="Liberation Sans, sans-serif" font-size="13.4" fill="#6c707c" text-anchor="middle" textLength="28.6" lengthAdjust="spacingAndGlyphs">WCS</text>
<path d="M1841 440.6 H1850 L1845.5 446.4 Z" fill="#9497a3" stroke="#b4b7c1" stroke-width="1" />
<rect x="1872.4" y="486" width="40.2" height="257.6" fill="#585d66" rx="3.6" />
<circle cx="1905.2" cy="491.8" r="3.9" fill="#4a5059" />
<path d="M1903.4 490 L1907 493.6 M1907 490 L1903.4 493.6" fill="none" stroke="#6d727a" stroke-width="1.1" />
<circle cx="1905.8" cy="737" r="3.9" fill="#4a5059" />
<path d="M1903.6 735.4 H1908 M1903.4 737 H1908.2 L1905.8 739.8 Z" fill="#6d727a" stroke="#6d727a" stroke-width="0.8" />
<path d="M1878.2 520.6 A13.8 13.8 0 0 1 1892 506.8 H1903 Q1905.8 506.8 1905.8 509.6 V520.6 A13.8 13.8 0 0 1 1878.2 520.6 Z" fill="none" stroke="#454b54" stroke-width="1.5" />
<circle cx="1891.8" cy="520" r="7.8" fill="#50565f" stroke="#454b54" stroke-width="1.5" />
<path d="M1886.4 525.8 L1882 530 M1897.2 525.8 L1901.6 530" fill="none" stroke="#454b54" stroke-width="1.3" />
<path d="M1888.6 545 H1895.4 L1892 548.8 Z" fill="#454b54" />
<line x1="1876" y1="553.6" x2="1909" y2="553.6" stroke="#62676f" stroke-width="1" />
<path d="M1878.6 572.6 C1880 570.6 1883 571 1885 574.6 L1886.6 577 L1884.4 564.6 C1884 561 1887.4 560.6 1888 564 L1889.6 573 L1890.4 562.4 C1890.6 558.6 1894.2 558.6 1894.2 562.4 L1894.4 573 L1896.8 564 C1897.6 560.6 1900.8 561.4 1900.2 565 L1898.6 574.6 L1902.4 568.6 C1904 565.8 1906.6 567.2 1905.4 570.4 L1901.6 581 C1900.4 585 1898.6 587.4 1896 587.4 L1889.6 587.4 C1886.6 587.4 1884.4 583.6 1882 579.6 C1880.6 577.4 1878.8 575.6 1878 574.4 C1877.6 573.6 1878 572.8 1878.6 572.6 Z" fill="none" stroke="#454b54" stroke-width="1.5" stroke-linejoin="round"/>
<path d="M1880 595.4 L1894 609.6 M1880 610.4 L1895 595.4" fill="none" stroke="#454b54" stroke-width="1.5" />
<path d="M1877.8 593.2 H1883.4 L1877.8 598.8 Z M1897 593.2 H1891.4 L1897 598.8 Z M1877.8 612.8 H1883.4 L1877.8 607.2 Z" fill="#454b54" />
<circle cx="1898" cy="611.4" r="5.2" fill="#50565f" stroke="#454b54" stroke-width="1.5" />
<line x1="1901.8" y1="615.6" x2="1906.4" y2="621.6" stroke="#454b54" stroke-width="2.6" />
<path d="M1890 630.8 H1895.2 L1892.6 633.8 Z" fill="#454b54" />
<path d="M1892 639.6 L1898 646.8 H1894.6 V666 H1889.4 V646.8 H1886 Z" fill="none" stroke="#454b54" stroke-width="1.4" stroke-linejoin="round"/>
<path d="M1889.4 653.4 C1883 653.8 1878.6 655.4 1878.6 657.6 C1878.6 659 1880.4 660.2 1883.4 661 M1894.6 653.4 C1901 653.8 1905.4 655.4 1905.4 657.6 C1905.4 660.2 1899.4 662 1892 662 C1890.4 662 1888.8 661.9 1887.4 661.8" fill="none" stroke="#454b54" stroke-width="1.4" />
<path d="M1879.6 661.6 L1886.4 657.6 V665.6 Z" fill="#454b54" />
<path d="M1889.2 678 H1896 L1892.6 681.8 Z" fill="#454b54" />
<line x1="1876" y1="686.6" x2="1909" y2="686.6" stroke="#62676f" stroke-width="1" />
<rect x="1878.6" y="692.6" width="7" height="7" fill="none" stroke="#454b54" stroke-width="1.3" rx="0" />
<rect x="1888.8" y="692.6" width="7" height="7" fill="none" stroke="#454b54" stroke-width="1.3" rx="0" />
<rect x="1899" y="692.6" width="7" height="7" fill="none" stroke="#454b54" stroke-width="1.3" rx="0" />
<rect x="1878.6" y="703.6" width="20" height="15.4" fill="none" stroke="#454b54" stroke-width="1.4" rx="0" />
<path d="M1884.6 706.6 L1893 711.4 L1884.6 716.2 Z" fill="#454b54" />
<rect x="426.4" y="945.2" width="1.6" height="1.5" fill="#e8e8e8" rx="0" />
<rect x="429.6" y="945.2" width="1.6" height="1.5" fill="#e8e8e8" rx="0" />
<rect x="426.4" y="947.95" width="1.6" height="1.5" fill="#e8e8e8" rx="0" />
<rect x="429.6" y="947.95" width="1.6" height="1.5" fill="#e8e8e8" rx="0" />
<rect x="426.4" y="950.7" width="1.6" height="1.5" fill="#e8e8e8" rx="0" />
<rect x="429.6" y="950.7" width="1.6" height="1.5" fill="#e8e8e8" rx="0" />
<rect x="426.4" y="953.45" width="1.6" height="1.5" fill="#e8e8e8" rx="0" />
<rect x="429.6" y="953.45" width="1.6" height="1.5" fill="#e8e8e8" rx="0" />
<rect x="426.4" y="956.2" width="1.6" height="1.5" fill="#e8e8e8" rx="0" />
<rect x="429.6" y="956.2" width="1.6" height="1.5" fill="#e8e8e8" rx="0" />
<rect x="426.4" y="958.95" width="1.6" height="1.5" fill="#e8e8e8" rx="0" />
<rect x="429.6" y="958.95" width="1.6" height="1.5" fill="#e8e8e8" rx="0" />
<rect x="426.4" y="961.7" width="1.6" height="1.5" fill="#e8e8e8" rx="0" />
<rect x="429.6" y="961.7" width="1.6" height="1.5" fill="#e8e8e8" rx="0" />
<rect x="426.4" y="964.45" width="1.6" height="1.5" fill="#e8e8e8" rx="0" />
<rect x="429.6" y="964.45" width="1.6" height="1.5" fill="#e8e8e8" rx="0" />
<path d="M441 949.2 L451.2 959.4 M451.2 949.2 L441 959.4" fill="none" stroke="#e8e8e8" stroke-width="2" />
<g transform="translate(477 954.4) rotate(45)"><path d="M-2.2 -11.6 V-7.4 H2.2 V-11.6 A5.4 5.4 0 0 1 2 -1.4 V11 A2 2 0 0 1 -2 11 V-1.4 A5.4 5.4 0 0 1 -2.2 -11.6 Z" fill="#e0e0e0"/></g>
<rect x="498.6" y="947.4" width="19" height="14.6" fill="#ececec" stroke="#b3b3b3" stroke-width="1" rx="0" />
<rect x="498.6" y="947.4" width="19" height="3" fill="#b3b3b3" rx="0" />
<path d="M501 953.6 L503.4 955.4 L501 957.2 M504.6 958 H508" fill="none" stroke="#9a9a9a" stroke-width="0.9" />
<path d="M520.8 953 H529.6 L525.2 957.8 Z" fill="#adadad"/>
<path d="M1485.6 957.8 H1495.2 L1490.4 953 Z" fill="#555"/>
<path d="M30 980 H104 L92.6 1010 H18 Z" fill="#3b4453" />
<line x1="162" y1="1006" x2="170" y2="985.6" stroke="#4a5365" stroke-width="1.2" />
<line x1="212" y1="1006" x2="220" y2="985.6" stroke="#4a5365" stroke-width="1.2" />
<rect x="183" y="994" width="15" height="2.2" fill="#e8e8e8" rx="0" />
<rect x="189.4" y="987.6" width="2.2" height="15" fill="#e8e8e8" rx="0" />
<line x1="1306.4" y1="987" x2="1306.4" y2="1006" stroke="#e6e6e6" stroke-width="1.1" />
<line x1="1303" y1="990.4" x2="1322" y2="990.4" stroke="#e6e6e6" stroke-width="1.1" />
<line x1="1310.7" y1="987" x2="1310.7" y2="1006" stroke="#e6e6e6" stroke-width="1.1" />
<line x1="1303" y1="994.7" x2="1322" y2="994.7" stroke="#e6e6e6" stroke-width="1.1" />
<line x1="1315" y1="987" x2="1315" y2="1006" stroke="#e6e6e6" stroke-width="1.1" />
<line x1="1303" y1="999" x2="1322" y2="999" stroke="#e6e6e6" stroke-width="1.1" />
<line x1="1319.3" y1="987" x2="1319.3" y2="1006" stroke="#e6e6e6" stroke-width="1.1" />
<line x1="1303" y1="1003.3" x2="1322" y2="1003.3" stroke="#e6e6e6" stroke-width="1.1" />
<rect x="1335.2" y="989.4" width="3" height="3" fill="#e6e6e6" rx="0" />
<rect x="1341.2" y="989.4" width="3" height="3" fill="#e6e6e6" rx="0" />
<rect x="1347.2" y="989.4" width="3" height="3" fill="#e6e6e6" rx="0" />
<rect x="1335.2" y="995.4" width="3" height="3" fill="#e6e6e6" rx="0" />
<rect x="1341.2" y="995.4" width="3" height="3" fill="#e6e6e6" rx="0" />
<rect x="1347.2" y="995.4" width="3" height="3" fill="#e6e6e6" rx="0" />
<rect x="1335.2" y="1001.4" width="3" height="3" fill="#e6e6e6" rx="0" />
<rect x="1341.2" y="1001.4" width="3" height="3" fill="#e6e6e6" rx="0" />
<rect x="1347.2" y="1001.4" width="3" height="3" fill="#e6e6e6" rx="0" />
<path d="M1363.2 994 H1372.8 L1368 999.2 Z" fill="#dcdcdc"/>
<path d="M1386.6 987.4 V1006.4 H1406" fill="none" stroke="#e6e6e6" stroke-width="1.3" />
<path d="M1386.6 1001.6 H1391.4 V1006.4" fill="none" stroke="#e6e6e6" stroke-width="1" />
<circle cx="1424.3" cy="997.3" r="8" fill="none" stroke="#e6e6e6" stroke-width="1.3" />
<path d="M1433.2 988 L1424.3 997.3 H1436" fill="none" stroke="#e6e6e6" stroke-width="1.2" />
<path d="M1446 994 H1456 L1451 999.2 Z" fill="#dcdcdc"/>
<line x1="1476.4" y1="986.9" x2="1476.4" y2="1005.2" stroke="#3fcf5f" stroke-width="1.3" />
<line x1="1468.2" y1="988" x2="1483.6" y2="1003.6" stroke="#e0525e" stroke-width="1.3" />
<rect x="1474.6" y="994" width="3.4" height="3.4" fill="#3b4453" stroke="#e6e6e6" stroke-width="0.9" rx="0" />
<path d="M1496 994 H1506 L1501 999.2 Z" fill="#dcdcdc"/>
<path d="M1517.6 1002.8 L1533.6 989.4" fill="none" stroke="#e6e6e6" stroke-width="1.2" />
<line x1="1518" y1="1004.4" x2="1537" y2="1004.4" stroke="#b8bcc3" stroke-width="1.3" />
<rect x="1523.6" y="994.6" width="3.6" height="3.6" fill="#e6e6e6" rx="0" />
<rect x="1549.6" y="989.6" width="17" height="17" fill="none" stroke="#f4f4f4" stroke-width="1.3" rx="0" />
<rect x="1547.4" y="987.6" width="5" height="5" fill="#5b8dc6" stroke="#f4f4f4" stroke-width="1.1" rx="0" />
<path d="M1577 994 H1587 L1582 999.2 Z" fill="#dcdcdc"/>
<path d="M1608.6 986.8 L1612.2 995.6 L1611.2 997.4 L1617.8 1007.2 L1611.8 1003.8 L1608.6 1002 L1605.4 1003.8 L1599.4 1007.2 L1606 997.4 L1605 995.6 Z" fill="#ffffff" />
<circle cx="1616.1" cy="991.3" r="3.3" fill="none" stroke="#ffffff" stroke-width="1.2" />
<path d="M1638.5 986.8 L1642.1 995.6 L1641.1 997.4 L1647.7 1007.2 L1641.7 1003.8 L1638.5 1002 L1635.3 1003.8 L1629.3 1007.2 L1635.9 997.4 L1634.9 995.6 Z" fill="#dcdcdc" />
<path d="M1648 987.2 L1643.2 991.6 H1645.8 L1643.4 996.4 L1649.2 990.6 H1646.4 Z" fill="#dcdcdc" />
<path d="M1669.4 986.8 L1673 995.6 L1672 997.4 L1678.6 1007.2 L1672.6 1003.8 L1669.4 1002 L1666.2 1003.8 L1660.2 1007.2 L1666.8 997.4 L1665.8 995.6 Z" fill="#dcdcdc" />
<path d="M1712 994 H1722 L1717 999.2 Z" fill="#dcdcdc"/>
<path d="M1742.79 989.73 L1743.98 986.65 L1746.02 986.65 L1747.21 989.73 L1748.58 990.30 L1751.60 988.96 L1753.04 990.40 L1751.70 993.42 L1752.27 994.79 L1755.35 995.98 L1755.35 998.02 L1752.27 999.21 L1751.70 1000.58 L1753.04 1003.60 L1751.60 1005.04 L1748.58 1003.70 L1747.21 1004.27 L1746.02 1007.35 L1743.98 1007.35 L1742.79 1004.27 L1741.42 1003.70 L1738.40 1005.04 L1736.96 1003.60 L1738.30 1000.58 L1737.73 999.21 L1734.65 998.02 L1734.65 995.98 L1737.73 994.79 L1738.30 993.42 L1736.96 990.40 L1738.40 988.96 L1741.42 990.30 Z M1748.6 997 A3.6 3.6 0 1 0 1741.4 997 A3.6 3.6 0 1 0 1748.6 997 Z" fill="#e6e6e6" fill-rule="evenodd"/>
<path d="M1765 994 H1775 L1770 999.2 Z" fill="#dcdcdc"/>
<rect x="1786" y="995.2" width="19.2" height="3" fill="#e6e6e6" rx="0" />
<rect x="1794.1" y="987.4" width="3" height="18.6" fill="#e6e6e6" rx="0" />
<rect x="1820" y="988" width="6.4" height="6.4" fill="none" stroke="#e6e6e6" stroke-width="1.1" rx="0" />
<circle cx="1834.6" cy="995.2" r="4" fill="none" stroke="#e6e6e6" stroke-width="1.1" />
<path d="M1826 999.6 L1830 1006.4 H1822 Z" fill="none" stroke="#e6e6e6" stroke-width="1.1" />
<rect x="1859.4" y="989.4" width="19.4" height="14.4" fill="none" stroke="#e6e6e6" stroke-width="1.2" rx="0" />
<path d="M1870.6 995 L1875 991.6 M1872 991.4 H1875.4 V994.6 M1867.2 998.6 L1863 1001.8 M1862.8 998.8 V1002 H1866" fill="none" stroke="#e6e6e6" stroke-width="1.1" />
<rect x="1889" y="987.8" width="20" height="2.8" fill="#e6e6e6" rx="0" />
<rect x="1889" y="995" width="20" height="2.8" fill="#e6e6e6" rx="0" />
<rect x="1889" y="1002.2" width="20" height="2.8" fill="#e6e6e6" rx="0" />
</svg>
<div id="tx">
<span class="t" id="t0" style="left:414.32px;top:8.00px;font-size:15px;line-height:21px;color:#6ebdf6;letter-spacing:-0.670px;">Share</span>
<span class="t" id="t1" style="left:687.33px;top:7.30px;font-size:15px;line-height:21px;color:#f1f1f1;letter-spacing:-0.045px;">Autodesk AutoCAD 2023</span>
<span class="t" id="t2" style="left:868.33px;top:7.30px;font-size:15px;line-height:21px;color:#f1f1f1;letter-spacing:0.073px;">Drawing1.dwg</span>
<span class="t" id="t3" style="left:1213.87px;top:8.15px;font-size:14px;line-height:20px;color:#c9ccd3;font-style:italic;letter-spacing:-0.373px;">Type a keyword or phrase</span>
<span class="t" id="t4" style="left:1496.03px;top:7.80px;font-size:15px;line-height:21px;color:#f1f1f1;letter-spacing:-0.296px;">evafrias2020</span>
<span class="t" id="t5" style="left:22.32px;top:41.30px;font-size:15px;line-height:21px;color:#f1f1f1;letter-spacing:0.778px;">Home</span>
<span class="t" id="t6" style="left:88.33px;top:41.30px;font-size:15px;line-height:21px;color:#e3e5e8;letter-spacing:-0.133px;">Insert</span>
<span class="t" id="t7" style="left:148.32px;top:41.30px;font-size:15px;line-height:21px;color:#e3e5e8;letter-spacing:0.255px;">Annotate</span>
<span class="t" id="t8" style="left:234.32px;top:41.30px;font-size:15px;line-height:21px;color:#e3e5e8;letter-spacing:-0.187px;">Parametric</span>
<span class="t" id="t9" style="left:328.32px;top:41.30px;font-size:15px;line-height:21px;color:#e3e5e8;letter-spacing:0.200px;">View</span>
<span class="t" id="t10" style="left:384.32px;top:41.30px;font-size:15px;line-height:21px;color:#e3e5e8;letter-spacing:0.026px;">Manage</span>
<span class="t" id="t11" style="left:462.62px;top:41.30px;font-size:15px;line-height:21px;color:#e3e5e8;letter-spacing:0.404px;">Output</span>
<span class="t" id="t12" style="left:532.33px;top:41.30px;font-size:15px;line-height:21px;color:#e3e5e8;letter-spacing:0.415px;">Add-ins</span>
<span class="t" id="t13" style="left:608.03px;top:41.30px;font-size:15px;line-height:21px;color:#e3e5e8;letter-spacing:0.293px;">Collaborate</span>
<span class="t" id="t14" style="left:710.53px;top:41.30px;font-size:15px;line-height:21px;color:#e3e5e8;letter-spacing:-0.313px;">Express Tools</span>
<span class="t" id="t15" style="left:822.33px;top:41.30px;font-size:15px;line-height:21px;color:#e3e5e8;letter-spacing:0.006px;">Featured Apps</span>
<span class="t" id="t16" style="left:22.02px;top:116.70px;font-size:15px;line-height:21px;color:#f1f1f1;letter-spacing:-0.303px;">Line</span>
<span class="t" id="t17" style="left:62.73px;top:116.70px;font-size:15px;line-height:21px;color:#f1f1f1;letter-spacing:-0.112px;">Polyline</span>
<span class="t" id="t18" style="left:132.02px;top:117.10px;font-size:15px;line-height:21px;color:#f1f1f1;letter-spacing:-0.139px;">Circle</span>
<span class="t" id="t19" style="left:195.72px;top:117.10px;font-size:15px;line-height:21px;color:#f1f1f1;letter-spacing:0.225px;">Arc</span>
<span class="t" id="t20" style="left:122.12px;top:165.90px;font-size:15px;line-height:21px;color:#f1f1f1;letter-spacing:0.011px;">Draw</span>
<span class="t" id="t21" style="left:319.62px;top:74.10px;font-size:15px;line-height:21px;color:#f1f1f1;letter-spacing:0.354px;">Move</span>
<span class="t" id="t22" style="left:411.82px;top:74.10px;font-size:15px;line-height:21px;color:#f1f1f1;letter-spacing:0.029px;">Rotate</span>
<span class="t" id="t23" style="left:499.02px;top:74.10px;font-size:15px;line-height:21px;color:#f1f1f1;letter-spacing:-0.262px;">Trim</span>
<span class="t" id="t24" style="left:320.52px;top:105.00px;font-size:15px;line-height:21px;color:#f1f1f1;letter-spacing:-0.060px;">Copy</span>
<span class="t" id="t25" style="left:411.02px;top:105.00px;font-size:15px;line-height:21px;color:#f1f1f1;letter-spacing:0.439px;">Mirror</span>
<span class="t" id="t26" style="left:499.62px;top:105.00px;font-size:15px;line-height:21px;color:#f1f1f1;letter-spacing:0.216px;">Fillet</span>
<span class="t" id="t27" style="left:320.62px;top:135.80px;font-size:15px;line-height:21px;color:#f1f1f1;letter-spacing:-0.130px;">Stretch</span>
<span class="t" id="t28" style="left:410.62px;top:135.80px;font-size:15px;line-height:21px;color:#f1f1f1;letter-spacing:-0.420px;">Scale</span>
<span class="t" id="t29" style="left:498.32px;top:135.80px;font-size:15px;line-height:21px;color:#f1f1f1;letter-spacing:-0.048px;">Array</span>
<span class="t" id="t30" style="left:411.82px;top:165.80px;font-size:15px;line-height:21px;color:#f1f1f1;letter-spacing:0.672px;">Modify</span>
<span class="t" id="t31" style="left:615.33px;top:56.64px;font-size:50.4px;line-height:71px;color:#d6d6d6;">A</span>
<span class="t" id="t32" style="left:619.73px;top:116.90px;font-size:15px;line-height:21px;color:#f1f1f1;letter-spacing:-0.255px;">Text</span>
<span class="t" id="t33" style="left:662.03px;top:116.30px;font-size:15px;line-height:21px;color:#f1f1f1;letter-spacing:0.072px;">Dimension</span>
<span class="t" id="t34" style="left:647.93px;top:165.90px;font-size:15px;line-height:21px;color:#f1f1f1;letter-spacing:0.313px;">Annotation</span>
<span class="t" id="t35" style="left:808.03px;top:116.30px;font-size:15px;line-height:21px;color:#f1f1f1;letter-spacing:-0.470px;">Layer</span>
<span class="t" id="t36" style="left:792.03px;top:136.30px;font-size:15px;line-height:21px;color:#f1f1f1;letter-spacing:-0.092px;">Properties</span>
<span class="t" id="t37" style="left:928.03px;top:165.80px;font-size:15px;line-height:21px;color:#f1f1f1;letter-spacing:-0.696px;">Layers</span>
<span class="t" id="t38" style="left:1135.73px;top:115.30px;font-size:15px;line-height:21px;color:#f1f1f1;letter-spacing:-0.153px;">Insert</span>
<span class="t" id="t39" style="left:1149.73px;top:165.50px;font-size:15px;line-height:21px;color:#f1f1f1;letter-spacing:0.141px;">Block</span>
<span class="t" id="t40" style="left:1246.03px;top:115.80px;font-size:15px;line-height:21px;color:#f1f1f1;letter-spacing:0.123px;">Match</span>
<span class="t" id="t41" style="left:1233.12px;top:136.00px;font-size:15px;line-height:21px;color:#f1f1f1;letter-spacing:-0.092px;">Properties</span>
<span class="t" id="t42" style="left:1314.83px;top:165.50px;font-size:15px;line-height:21px;color:#f1f1f1;letter-spacing:-0.058px;">Properties</span>
<span class="t" id="t43" style="left:1509.53px;top:115.80px;font-size:15px;line-height:21px;color:#f1f1f1;letter-spacing:0.062px;">Group</span>
<span class="t" id="t44" style="left:1514.33px;top:165.50px;font-size:15px;line-height:21px;color:#f1f1f1;letter-spacing:-0.231px;">Groups</span>
<span class="t" id="t45" style="left:1605.92px;top:116.70px;font-size:15px;line-height:21px;color:#f1f1f1;letter-spacing:-0.318px;">Measure</span>
<span class="t" id="t46" style="left:1615.83px;top:165.50px;font-size:15px;line-height:21px;color:#f1f1f1;letter-spacing:0.313px;">Utilities</span>
<span class="t" id="t47" style="left:1726.92px;top:117.90px;font-size:15px;line-height:21px;color:#f1f1f1;letter-spacing:-0.952px;">Paste</span>
<span class="t" id="t48" style="left:1733.83px;top:165.50px;font-size:15px;line-height:21px;color:#f1f1f1;letter-spacing:0.229px;">Clipboard</span>
<span class="t" id="t49" style="left:1848.03px;top:116.70px;font-size:15px;line-height:21px;color:#f1f1f1;letter-spacing:-0.951px;">Base</span>
<span class="t" id="t50" style="left:1829.73px;top:165.50px;font-size:15px;line-height:21px;color:#f1f1f1;letter-spacing:0.167px;">View</span>
<span class="t" id="t51" style="left:966.33px;top:74.30px;font-size:15px;line-height:21px;color:#f1f1f1;">0</span>
<span class="t" id="t52" style="left:1364.03px;top:74.30px;font-size:15px;line-height:21px;color:#f1f1f1;letter-spacing:-0.530px;">ByLayer</span>
<span class="t" id="t53" style="left:1421.03px;top:105.30px;font-size:15px;line-height:21px;color:#f1f1f1;letter-spacing:-0.530px;">ByLayer</span>
<span class="t" id="t54" style="left:1421.03px;top:136.30px;font-size:15px;line-height:21px;color:#f1f1f1;letter-spacing:-0.530px;">ByLayer</span>
<span class="t" id="t55" style="left:38.73px;top:196.10px;font-size:15px;line-height:21px;color:#e8e9eb;letter-spacing:0.066px;">Start</span>
<span class="t" id="t56" style="left:99.92px;top:196.10px;font-size:15px;line-height:21px;color:#f1f1f1;font-weight:700;letter-spacing:0.224px;">Drawing1*</span>
<span class="t" id="t57" style="left:11.07px;top:232.15px;font-size:14px;line-height:20px;color:#dfe0e2;letter-spacing:0.471px;">[−][SE Isometric][2D Wireframe]</span>
<span class="t" id="t58" style="left:38.62px;top:985.30px;font-size:15px;line-height:21px;color:#f1f1f1;font-weight:700;letter-spacing:0.427px;">Model</span>
<span class="t" id="t59" style="left:112.33px;top:985.30px;font-size:15px;line-height:21px;color:#e8e9eb;letter-spacing:-0.355px;">A3RD</span>
<span class="t" id="t60" style="left:1239.92px;top:987.00px;font-size:15px;line-height:21px;color:#f1f1f1;letter-spacing:-0.498px;">MODEL</span>
<span class="t" id="t61" style="left:1690.51px;top:986.56px;font-size:15.4px;line-height:22px;color:#f1f1f1;font-weight:700;transform:scaleX(0.7454);transform-origin:0 0;">1:1</span>
<span class="t m" id="t62" style="left:501.64px;top:863.10px;font-size:14.63px;line-height:20px;color:#d2d2d2;letter-spacing:0.269px;">CIRCLE</span>
<span class="t m" id="t63" style="left:501.64px;top:888.10px;font-size:14.63px;line-height:20px;color:#ececec;letter-spacing:0.231px;">Specify center point for circle or [3P/2P/Ttr (tan tan radius)]: 0,0</span>
<span class="t m" id="t64" style="left:501.64px;top:913.10px;font-size:14.63px;line-height:20px;color:#f4f4f4;letter-spacing:0.235px;">Specify radius of circle or [Diameter] &lt;5.000&gt;: 2</span>
<span class="t m" id="t65" style="left:538.84px;top:945.80px;font-size:14.63px;line-height:20px;color:#7d7d7d;font-style:italic;letter-spacing:0.180px;">Type a command</span>
</div>
</body></html>
